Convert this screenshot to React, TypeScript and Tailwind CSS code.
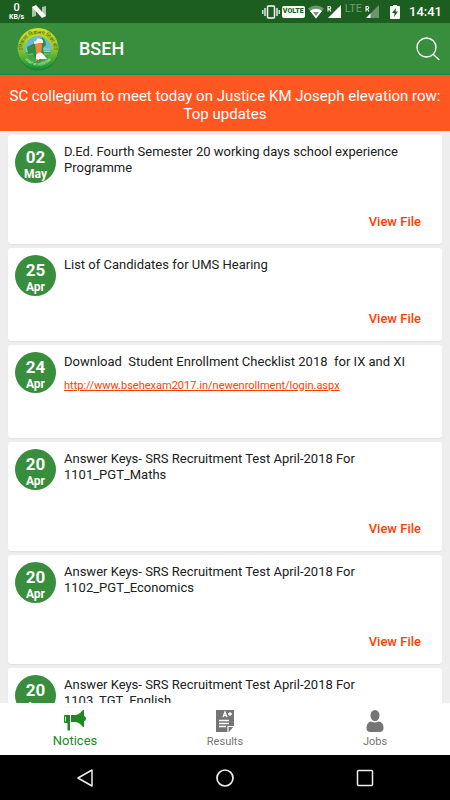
interface Notice {
  day: string;
  month: string;
  title: string;
  link?: string;
}

const notices: Notice[] = [
  { day: "02", month: "May", title: "D.Ed. Fourth Semester 20 working days school experience Programme" },
  { day: "25", month: "Apr", title: "List of Candidates for UMS Hearing" },
  {
    day: "24",
    month: "Apr",
    title: "Download  Student Enrollment Checklist 2018  for IX and XI",
    link: "http://www.bsehexam2017.in/newenrollment/login.aspx",
  },
  { day: "20", month: "Apr", title: "Answer Keys- SRS Recruitment Test April-2018 For 1101_PGT_Maths" },
  { day: "20", month: "Apr", title: "Answer Keys- SRS Recruitment Test April-2018 For 1102_PGT_Economics" },
  { day: "20", month: "Apr", title: "Answer Keys- SRS Recruitment Test April-2018 For 1103_TGT_English" },
];

function SignalIcon({ weak = false }: { weak?: boolean }) {
  return (
    <svg width="15" height="14" viewBox="0 0 15 14" fill="none">
      <path d="M14 0v13H1z" fill="#fff" opacity={weak ? 0.35 : 1} />
      {weak && <path d="M5.500 8.500V13H1z" fill="#fff" />}
      <path d="M0 0h5v7H0z" fill="#1b5e20" />
      <path d="M1 6.500v-5h1.500a1.200 1.200 0 0 1 0 2.600H1M2.400 4l1.400 2.500" stroke="#fff" strokeWidth="1.100" />
    </svg>
  );
}

function StatusBar() {
  return (
    <div className="flex h-[23px] shrink-0 items-center justify-between bg-[#1b5e20] pl-[9px] pr-2 text-white">
      <div className="flex items-center gap-2">
        <div className="flex flex-col items-center font-medium">
          <span className="text-[11px] leading-[11px]">0</span>
          <span className="text-[7px] font-bold leading-[8px]">KB/s</span>
        </div>
        <svg width="14" height="13" viewBox="0 0 14 13">
          <path d="M0 2l4-1v10l-4 1zM10 2l4-1v10l-4 1z" fill="#a9c5ab" />
          <path d="M0 2l4-2 10 11-4 2z" fill="#fff" />
        </svg>
      </div>
      <div className="flex items-center">
        <svg width="18" height="14" viewBox="0 0 18 14" fill="none" stroke="#fff">
          <rect x="5.500" y="1" width="7" height="12" rx="1" strokeWidth="1.500" />
          <path d="M3 3v8M15 3v8" strokeWidth="1.300" />
          <path d="M.8 5v4M17.200 5v4" strokeWidth="1.200" />
        </svg>
        <span className="ml-[2px] flex h-3 w-[23px] items-center justify-center rounded-xs bg-white text-[7px] font-black text-[#1b5e20]">VOLTE</span>
        <svg className="ml-[3px]" width="16" height="14" viewBox="0 0 16 14">
          <path d="M0 3.500a12 12 0 0 1 16 0L8 13.500z" fill="#fff" opacity=".35" />
          <path d="M2 6a9 9 0 0 1 12 0l-6 7.500z" fill="#fff" />
          <path d="M5 7h6l-3 4z" fill="#78997b" />
        </svg>
        <span className="ml-[3px]"><SignalIcon /></span>
        <span className="ml-[3px] mb-[6px] text-[11px] leading-[11px] text-white/40">LTE</span>
        <span className="ml-[3px]"><SignalIcon weak /></span>
        <svg className="ml-[10px]" width="10" height="14" viewBox="0 0 10 14">
          <path d="M3 0h4v1h2q1 0 1 1v11q0 1-1 1H1q-1 0-1-1V2q0-1 1-1h2z" fill="#fff" />
          <path d="M6 3L2 8h2.500L4 12l4-5.500H5.500z" fill="#1b5e20" />
        </svg>
        <span className="ml-[9px] text-[13px] font-medium leading-4">14:41</span>
      </div>
    </div>
  );
}

function Emblem() {
  return (
    <svg width="42" height="44" viewBox="0 0 42 44">
      <defs>
        <linearGradient id="ring" x1="0" y1="0" x2="0" y2="1">
          <stop offset="0" stopColor="#d9e021" />
          <stop offset=".5" stopColor="#91c52e" />
          <stop offset="1" stopColor="#079444" />
        </linearGradient>
        <path id="upper" d="M5 23a16 16 0 1 1 32 0" />
        <path id="lower" d="M4 22a17 17 0 0 0 34 0" />
      </defs>
      <circle cx="21" cy="23" r="20.500" fill="#23702a" opacity=".6" />
      <circle cx="21" cy="21.500" r="20.500" fill="url(#ring)" />
      <circle cx="21" cy="22" r="13" fill="#64b9dc" />
      <path d="M8.300 25h25.400a13 13 0 0 1-25.400 0" fill="#43a642" />
      <path d="M9 22h24M9 24.500h24M10 27h22" stroke="#b6dd9b" strokeWidth=".7" />
      <path d="M10 20l6-3 2-3 6 1 1-5 3 3 1 5-3 3 1 6-5 4-5-1-1-4-5 1z" fill="#2b9141" />
      <path d="M18 17h7l-1 15h-4z" fill="#ee8742" />
      <path d="M17 17q-1-3 2-3 1-4 4-2 4 0 3 4z" fill="#fff3dc" />
      <path d="M19 28q4-5 8 0l3 4h-7l-4 2z" fill="#fff" />
      <path d="M20 32v3M23 32v3" stroke="#b93829" />
      <circle cx="3.500" cy="22" r="1.100" fill="#f5e72a" />
      <circle cx="38.500" cy="22" r="1.100" fill="#f5e72a" />
      <text fontSize="5" fill="#285a1d" fontFamily="Noto Sans, sans-serif" textAnchor="middle">
        <textPath href="#upper" startOffset="50%">हरियाणा विद्यालय शिक्षा बोर्ड</textPath>
      </text>
      <text fontSize="4" fill="#d8efa1" fontFamily="Noto Sans, sans-serif" textAnchor="middle">
        <textPath href="#lower" startOffset="50%">तमसो मा ज्योतिर्गमय</textPath>
      </text>
    </svg>
  );
}

function Header() {
  return (
    <header className="flex h-[52px] shrink-0 items-center border-b border-[#079444] bg-[#388e3c] pl-[17px] pr-[10px] text-white">
      <Emblem />
      <h1 className="ml-5 text-[18px] font-medium leading-6">BSEH</h1>
      <button type="button" aria-label="Search" className="ml-auto">
        <svg width="24" height="24" viewBox="0 0 24 24" fill="none" stroke="currentColor" strokeWidth="1.300">
          <circle cx="10.500" cy="10.500" r="9.500" />
          <path d="M17.200 17.200L23.300 23" />
        </svg>
      </button>
    </header>
  );
}

function NoticeCard({ day, month, title, link }: Notice) {
  return (
    <article className="flex shrink-0 gap-2 rounded-[3px] bg-white px-[7px] pt-[7px] pb-3 shadow-[0_1px_1px_#e2e2e2]">
      <time className="flex size-[41px] shrink-0 flex-col items-center rounded-full bg-[#388e3c] pt-[6px] font-bold text-white">
        <span className="text-[17px] leading-[18px]">{day}</span>
        <span className="text-[12px] leading-4">{month}</span>
      </time>
      <div className="flex flex-1 flex-col pt-[2px]">
        <h2 className="whitespace-pre-wrap text-[13px] leading-4 text-[#212121]">{title}</h2>
        {link ? (
          <a href={link} className="mt-2 mb-8 text-[11px] leading-4 text-[#ff3d00] underline">{link}</a>
        ) : (
          <button type="button" className="mt-9 mr-[14px] self-end text-[13px] font-medium leading-5 text-[#ff3d00]">View File</button>
        )}
      </div>
    </article>
  );
}

function MegaphoneIcon() {
  return (
    <svg width="22" height="22" viewBox="0 0 22 22" fill="currentColor">
      <path d="M7 6h4q4 0 8-5h1v6q2 0 2 2.500T20 12v6h-1q-4-5-8-5H7z" />
      <path d="M1 6h5v8H1q-1 0-1-1V7q0-1 1-1zM3.500 13H6v8.500H3.500z" />
      <path d="M1.500 7.500v5" stroke="#fff" strokeWidth=".8" />
    </svg>
  );
}

function ResultsIcon() {
  return (
    <svg width="18" height="22" viewBox="0 0 18 22" fill="none">
      <path d="M0 0h18v16l-5 6H0z" fill="currentColor" />
      <path d="M12 22v-5.500h6" stroke="#fff" strokeWidth="1.200" />
      <path d="M7 7l2-5 2 5M7.500 5.500h3M12 4h4M14 2v4M3 10.500h10M3 13.500h10M3 16.500h7" stroke="#fff" strokeWidth="1.300" />
    </svg>
  );
}

function PersonIcon() {
  return (
    <svg width="18" height="22" viewBox="0 0 18 22" fill="currentColor">
      <ellipse cx="9" cy="5.500" rx="4.500" ry="5.500" />
      <path d="M.5 18q0-6 5-6.500 3.500 2 7 0 5 .5 5 6.500 0 4-4 4h-9q-4 0-4-4z" />
    </svg>
  );
}

function BottomTabs() {
  return (
    <nav className="grid h-[52px] shrink-0 grid-cols-3 bg-white text-[#757575]">
      <button type="button" className="flex flex-col items-center pt-[6px] text-[#1b8a20]">
        <MegaphoneIcon />
        <span className="text-[13px] leading-5">Notices</span>
      </button>
      <button type="button" className="flex flex-col items-center pt-[7px]">
        <ResultsIcon />
        <span className="text-[11px] leading-5">Results</span>
      </button>
      <button type="button" className="flex flex-col items-center pt-[7px]">
        <PersonIcon />
        <span className="text-[11px] leading-5">Jobs</span>
      </button>
    </nav>
  );
}

function SystemNav() {
  return (
    <div className="flex h-[45px] shrink-0 items-center justify-center gap-[122px] bg-black text-[#eeeeee]">
      <button type="button" aria-label="Back">
        <svg width="18" height="18" viewBox="0 0 18 18" fill="none" stroke="currentColor" strokeWidth="1.500" strokeLinejoin="round">
          <path d="M16 1v16L2 9z" />
        </svg>
      </button>
      <button type="button" aria-label="Home">
        <svg width="18" height="18" viewBox="0 0 18 18" fill="none" stroke="currentColor" strokeWidth="1.700">
          <circle cx="9" cy="9" r="8" />
        </svg>
      </button>
      <button type="button" aria-label="Recent apps">
        <svg width="18" height="18" viewBox="0 0 18 18" fill="none" stroke="currentColor" strokeWidth="1.500">
          <rect x="1.500" y="1.500" width="15" height="15" rx="1" />
        </svg>
      </button>
    </div>
  );
}

export default function App() {
  return (
    <div className="flex h-screen flex-col overflow-hidden bg-[#eeeeee] font-[Roboto,sans-serif]">
      <StatusBar />
      <Header />
      <p className="shrink-0 bg-[#ff5722] px-1 pt-3 pb-2 text-center text-[15px] leading-[18px] text-white">
        SC collegium to meet today on Justice KM Joseph elevation row: Top updates
      </p>
      <main className="flex min-h-0 flex-1 flex-col gap-1 overflow-hidden px-2 pt-1">
        {notices.map((notice) => (
          <NoticeCard key={notice.title} {...notice} />
        ))}
      </main>
      <BottomTabs />
      <SystemNav />
    </div>
  );
}
